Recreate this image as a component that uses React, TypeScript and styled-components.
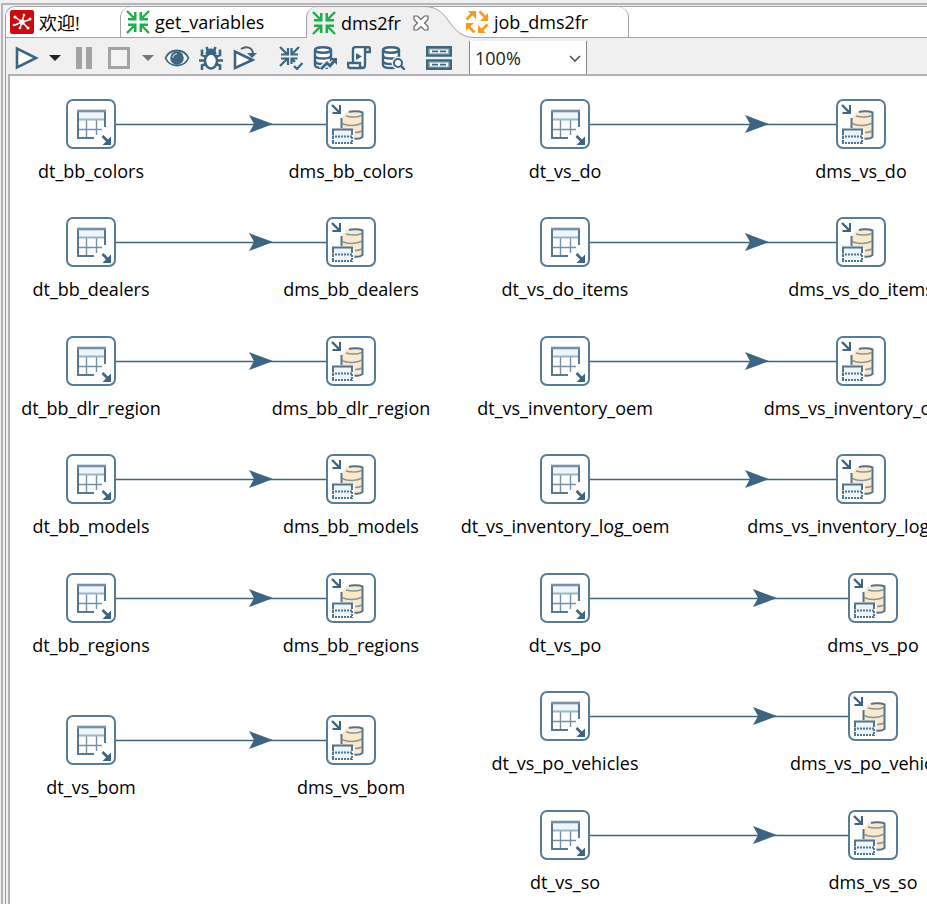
import React from "react";
import styled, { createGlobalStyle, css } from "styled-components";

const INK = "#3d6480";
const LINE = "#a3a3a6";

const GlobalStyle = createGlobalStyle`
  * { box-sizing: border-box; }
  html, body, #root { height: 100%; }
  body {
    margin: 0;
    background: #f0f0f0;
    color: #000;
    font-family: "Open Sans", "Noto Sans CJK SC", sans-serif;
    font-size: 18px;
    overflow: hidden;
  }
  button { font: inherit; color: inherit; border: 0; padding: 0; background: none; }
`;

const Shell = styled.div`
  height: 100%;
  min-height: 100vh;
  padding: 3px 0 0 1px;
  display: flex;
`;

const Frame = styled.div`
  flex: 1;
  min-width: 0;
  display: flex;
  border-left: 2px solid #b4b4ba;
  border-top: 2px solid #b4b4ba;
  padding: 1px 0 0 2px;
`;

const Editor = styled.main`
  flex: 1;
  min-width: 0;
  display: flex;
  flex-direction: column;
  border-left: 1px solid ${LINE};
  border-top: 1px solid ${LINE};
  border-top-left-radius: 10px;
`;

const TabBar = styled.div`
  display: flex;
  flex: none;
  height: 31px;
  background: #fff;
  border-bottom: 1px solid ${LINE};
  border-top-left-radius: 9px;
`;

const Tab = styled.div<{ $width: number; $kind?: "first" | "active" | "last" }>`
  position: relative;
  flex: none;
  display: flex;
  align-items: center;
  width: ${(p) => p.$width}px;
  height: 30px;
  padding-left: 5px;
  border-left: 1px solid ${LINE};
  border-top-left-radius: 10px;
  ${(p) =>
    p.$kind === "first" &&
    css`
      padding-left: 4px;
      border-left: 0;
    `}
  ${(p) =>
    p.$kind === "active" &&
    css`
      height: 31px;
      background: linear-gradient(#f0f0f0, #f0f0f0) left / 120px 100% no-repeat;
      z-index: 1;
    `}
  ${(p) =>
    p.$kind === "last" &&
    css`
      padding-left: 0;
      border-left: 0;
      border-right: 1px solid ${LINE};
      border-top-left-radius: 0;
      border-top-right-radius: 10px;
      z-index: 2;
    `}
`;

const TabButton = styled.button`
  display: flex;
  align-items: center;
  gap: 5px;
  height: 30px;
  white-space: nowrap;
  svg { flex: none; }
`;

const TabTail = styled.svg`
  position: absolute;
  left: 113px;
  top: -1px;
  z-index: -1;
`;

const CloseButton = styled.button`
  display: flex;
  margin-left: 12px;
`;

const Toolbar = styled.div`
  flex: none;
  display: flex;
  align-items: center;
  height: 36px;
  padding: 3px 0 0 8px;
`;

const Tool = styled.button<{ $width?: number; $after?: number }>`
  flex: none;
  display: flex;
  align-items: center;
  justify-content: center;
  width: ${(p) => p.$width ?? 26}px;
  height: 28px;
  margin-right: ${(p) => p.$after ?? 8}px;
`;

const ZoomField = styled.div`
  position: relative;
  align-self: flex-end;
  flex: none;
  display: flex;
  width: 118px;
  height: 33px;
  svg {
    position: absolute;
    right: 6px;
    top: 14px;
    pointer-events: none;
  }
`;

const ZoomSelect = styled.select`
  width: 100%;
  appearance: none;
  background: #fff;
  border: solid #85858a;
  border-width: 0 1px;
  border-radius: 0;
  padding: 0 5px;
  font: inherit;
  color: #222;
`;

const Canvas = styled.section`
  position: relative;
  flex: 1;
  margin-left: 2px;
  overflow: hidden;
  background: #fff;
  border: solid #b0b0b6;
  border-width: 2px 0 0 2px;
`;

const Hops = styled.svg`
  position: absolute;
  left: 0;
  top: 0;
  width: 100%;
  height: 100%;
`;

const Step = styled.div<{ $x: number; $y: number }>`
  position: absolute;
  left: ${(p) => p.$x}px;
  top: ${(p) => p.$y}px;
  width: 50px;
  display: flex;
  flex-direction: column;
  align-items: center;
`;

const StepBox = styled.button`
  flex: none;
  display: flex;
  align-items: center;
  justify-content: center;
  width: 50px;
  height: 50px;
  background: #fff;
  border: 2px solid #587c96;
  border-radius: 7px;
`;

const StepLabel = styled.span`
  margin-top: 9px;
  line-height: 26px;
  white-space: nowrap;
`;

const WelcomeIcon = () => (
  <svg width="24" height="24" viewBox="0 0 24 24">
    <rect width="24" height="24" rx="2" fill="#cc0a0e" />
    <g stroke="#fff" strokeWidth="1.5" fill="#fff">
      <path d="M12 12 5 7M12 12l2-7M12 12l7-2M12 12l6 6M12 12l-2 6M12 12l-7 3" />
      <circle cx="12" cy="12" r="2" />
      <circle cx="5" cy="7" r=".8" />
      <circle cx="14" cy="5" r=".6" />
      <circle cx="20" cy="9" r=".8" />
      <circle cx="18" cy="18" r=".8" />
      <circle cx="10" cy="18" r=".6" />
      <circle cx="4" cy="15" r=".6" />
    </g>
  </svg>
);

const InwardArrows = ({ size = 24, color = "#1fae4b" }) => (
  <svg width={size} height={size} viewBox="0 0 24 24" stroke={color} fill={color}>
    <path
      fill="none"
      strokeWidth="2.4"
      d="M1 1l8 8M23 1l-8 8M1 23l8-8M23 23l-8-8"
    />
    <path
      stroke="none"
      d="M10.500 2v8.500H2V8h6V2zM13.500 2v8.500H22V8h-6V2zM10.500 22v-8.500H2V16h6v6zM13.500 22v-8.500H22V16h-6v6z"
    />
  </svg>
);

const JobIcon = () => (
  <svg width="24" height="24" viewBox="0 0 24 24" stroke="#f79a20" fill="#f79a20">
    <path fill="none" strokeWidth="2.800" d="M1.500 9.500l6-6M14.500 1.500l6 6M22.500 14.500l-6 6M9.500 22.500l-6-6" />
    <path stroke="none" d="M3 1h8v8zM23 3v8h-8zM21 23h-8v-8zM1 21v-8h8z" />
  </svg>
);

const CloseIcon = () => (
  <svg width="16" height="16" viewBox="0 0 16 16">
    <path
      d="M1 1h3.500L8 4.500 11.500 1H15v3.500L11.500 8l3.500 3.500V15h-3.500L8 11.500 4.500 15H1v-3.500L4.500 8 1 4.500z"
      fill="#fff"
      stroke="#666"
      strokeWidth="1.200"
    />
  </svg>
);

const Caret = ({ color }: { color: string }) => (
  <svg width="12" height="6" viewBox="0 0 12 6">
    <path d="M0 0h12L6 6z" fill={color} />
  </svg>
);

const PlayIcon = () => (
  <svg width="24" height="24" viewBox="0 0 24 24">
    <path d="M2 2.500v19L21 12z" fill="#fff" stroke={INK} strokeWidth="2.600" />
  </svg>
);

const PauseIcon = () => (
  <svg width="16" height="22" viewBox="0 0 16 22">
    <path d="M0 0h6v22H0zM10 0h6v22h-6z" fill="#a3a3a3" />
  </svg>
);

const StopIcon = () => (
  <svg width="22" height="22" viewBox="0 0 22 22">
    <rect x="1.500" y="1.500" width="19" height="19" fill="#f3f3f3" stroke="#a3a3a3" strokeWidth="3" />
  </svg>
);

const EyeIcon = () => (
  <svg width="26" height="24" viewBox="0 0 26 24">
    <path d="M1.500 12C6 2 20 2 24.500 12 20 22 6 22 1.500 12z" fill="#fff" stroke={INK} strokeWidth="1.800" />
    <circle cx="13" cy="12" r="6.800" fill={INK} />
    <path d="M8.800 12a4.200 4.200 0 0 1 4.200-4.200" fill="none" stroke="#b8cbd8" strokeWidth="1.200" />
  </svg>
);

const BugIcon = () => (
  <svg width="24" height="24" viewBox="0 0 24 24" fill="none" stroke={INK} strokeWidth="2.600">
    <path d="M9 5 7.500 1M15 5l1.500-4M7 10.500 3 9V3.500M17 10.500 21 9V3.500M6 14.500H0M18 14.500h6M7 18l-4 1.500V24M17 18l4 1.500V24" />
    <ellipse cx="12" cy="15" rx="6" ry="7.500" fill="#fff" />
    <path d="M7.500 7.500a4.500 4 0 0 1 9 0z" fill={INK} strokeWidth="2" />
  </svg>
);

const ReplayIcon = () => (
  <svg width="24" height="24" viewBox="0 0 24 24" fill="none" stroke={INK}>
    <path d="M2 5.500v16.500L19.500 14z" fill="#fff" strokeWidth="2.600" />
    <path d="M8 3c5-3 11-2 12 4" strokeWidth="2" />
    <path d="M14 7h10l-5 5z" fill={INK} stroke="none" />
  </svg>
);

const VerifyIcon = () => (
  <svg width="24" height="24" viewBox="0 0 24 24" fill="none" stroke={INK} strokeWidth="2.200">
    <path d="M1 1l7 7M20 1l-7 7M1 20l7-7M2 8.500h7V2M19 8.500h-6.500V2M2 12.500h7V19M12.500 18v-5.500h6M13 13l3 3M15 20l3 3 5.500-6" />
  </svg>
);

const DbShape = () => (
  <>
    <path d="M2 4v15c0 2 4 3 8 3s8-1 8-3V4" fill="#fff" />
    <path d="M2 9.500c0 2 4 3 8 3s8-1 8-3M2 15c0 2 4 3 8 3s8-1 8-3" />
    <ellipse cx="10" cy="4" rx="8" ry="2.800" fill="#fff" />
  </>
);

const DbImpactIcon = () => (
  <svg width="24" height="24" viewBox="0 0 24 24" fill="none" stroke={INK} strokeWidth="2.400">
    <DbShape />
    <path d="M8 23l6-6 3 3 6-6" stroke="#f0f0f0" strokeWidth="6" />
    <path d="M8 23l6-6 3 3 5-6" strokeWidth="2.800" />
    <path d="M17 12h7v7z" fill={INK} stroke="none" />
  </svg>
);

const ScriptIcon = () => (
  <svg width="24" height="24" viewBox="0 0 24 24" fill="none" stroke={INK} strokeWidth="2.400">
    <path d="M6 17V4c0-2 1-3 3-3h12c-2 0-3 1-3 3v15c0 2-1 3-3 3H4c-2 0-3-1-3-3v-2h12v2c0 2 1 3 2 3" fill="#fff" />
    <path d="M18 6h5V3c0-1-1-2-2-2" />
    <path d="M9 7v7l6-3.500z" fill={INK} stroke="none" />
  </svg>
);

const DbSearchIcon = () => (
  <svg width="24" height="24" viewBox="0 0 24 24" fill="none" stroke={INK} strokeWidth="2.400">
    <DbShape />
    <circle cx="17" cy="17" r="6.500" fill="#f0f0f0" stroke="none" />
    <circle cx="17" cy="17" r="4" fill="#fff" strokeWidth="2" />
    <path d="M20 20l4 4" />
  </svg>
);

const ResultsIcon = () => (
  <svg width="26" height="24" viewBox="0 0 26 24" fill="none" stroke={INK} strokeWidth="2.400">
    <path d="M1.200 1.200h23.600v8.400H1.200zM1.200 14.400h23.600v8.400H1.200z" fill="#8fa8b8" />
    <path d="M4 5.400h18M4 18.600h18" stroke="#fff" strokeWidth="3.600" />
    <path d="M6 5.400h6M14 5.400h6M6 18.600h6M14 18.600h6" strokeWidth="1.800" />
  </svg>
);

const TableInputIcon = () => (
  <svg width="46" height="46" viewBox="0 0 46 46" fill="none">
    <path d="M10 10h27v8H10z" fill="#edf6fc" />
    <path d="M18.500 19v18M28.500 19v15M10 28.500h24" stroke="#7690a5" strokeWidth="1.400" />
    <path d="M10 18.500h27" stroke="#9db4c4" strokeWidth="2" />
    <path d="M37 26V10H10v27h16" stroke="#58788f" strokeWidth="2" />
    <path d="M9 10h29" stroke="#7891a5" strokeWidth="2.600" />
    <path d="M34.500 35l6 6" stroke={INK} strokeWidth="2.600" />
    <path d="M43 35.500V44h-8.500l3-3 2.500-2.500z" fill={INK} />
  </svg>
);

const TableOutputIcon = () => (
  <svg width="46" height="46" viewBox="0 0 46 46" fill="none">
    <path d="M13.500 17l5-6c4-2 12-2 16 0v25c-2 2-5 2-8 2v-9h-13z" fill="#fce8cb" />
    <path d="M21 11c3-1 10-1 13.500.500V36c-2 1.500-5 2-8 1.500M13.500 27V17" stroke="#54748b" strokeWidth="2" />
    <path d="M18 15c5 1.500 12 1 16-.500M14 22.500c6 3 15 2.500 20-.500M27 31.500c3 0 5-.500 7-1.500" stroke="#8397a1" strokeWidth="1.500" />
    <path d="M5 28.500h19v14H5z" fill="#edf6fc" />
    <path d="M4 28.500h21M5 28v6M24 28v6" stroke="#54748b" strokeWidth="2" />
    <path d="M4 35.500h21M4 42h21" stroke="#54748b" strokeWidth="1.800" strokeDasharray="2 1" />
    <path d="M5 36v7M24 36v7" stroke="#54748b" strokeWidth="2" strokeDasharray="2 1" />
    <path d="M4 4l7 7" stroke={INK} strokeWidth="2.400" />
    <path d="M13 4v9H4.500V11H9l2-2V4z" fill={INK} />
  </svg>
);

/* Canvas coordinates are the top-left corners of the step boxes. */
type Flow = { y: number; from: string; fromX: number; to: string; toX: number };

const flow = (y: number, fromX: number, toX: number, name: string): Flow => ({
  y,
  fromX,
  toX,
  from: `dt_${name}`,
  to: `dms_${name}`,
});

const flows: Flow[] = [
  flow(23, 56, 316, "bb_colors"),
  flow(141, 56, 316, "bb_dealers"),
  flow(260, 56, 316, "bb_dlr_region"),
  flow(378, 56, 316, "bb_models"),
  flow(497, 56, 316, "bb_regions"),
  flow(639, 56, 316, "vs_bom"),
  flow(23, 530, 826, "vs_do"),
  flow(141, 530, 826, "vs_do_items"),
  flow(260, 530, 826, "vs_inventory_oem"),
  flow(378, 530, 826, "vs_inventory_log_oem"),
  flow(497, 530, 838, "vs_po"),
  flow(615, 530, 838, "vs_po_vehicles"),
  flow(734, 530, 838, "vs_so"),
];

const Hop = ({ f }: { f: Flow }) => {
  const y = f.y + 25;
  const tip = Math.round((f.toX - f.fromX) * 0.63 + f.fromX + 43);
  return (
    <g>
      <path d={`M${f.fromX + 50} ${y + 0.5}H${f.toX}`} stroke={INK} strokeWidth="1.500" />
      <path d={`M${tip} ${y}l-24-9 5 9-5 9z`} fill={INK} />
    </g>
  );
};

export default function App() {
  return (
    <>
      <GlobalStyle />
      <Shell>
        <Frame>
          <Editor>
            <TabBar role="tablist">
              <Tab $width={114} $kind="first">
                <TabButton role="tab"><WelcomeIcon />欢迎!</TabButton>
              </Tab>
              <Tab $width={186}>
                <TabButton role="tab"><InwardArrows />get_variables</TabButton>
              </Tab>
              <Tab $width={159} $kind="active">
                <TabTail width="54" height="32" viewBox="0 0 54 32">
                  <path d="M0 1h5C31 1 28 31 54 31.500V32H0z" fill="#f0f0f0" />
                  <path d="M5 .500C31 1 28 31 54 31.500" fill="none" stroke={LINE} />
                </TabTail>
                <TabButton role="tab" aria-selected><InwardArrows />dms2fr</TabButton>
                <CloseButton aria-label="Close dms2fr"><CloseIcon /></CloseButton>
              </Tab>
              <Tab $width={164} $kind="last">
                <TabButton role="tab"><JobIcon />job_dms2fr</TabButton>
              </Tab>
            </TabBar>
            <Toolbar role="toolbar" aria-label="Transformation">
              <Tool aria-label="Run"><PlayIcon /></Tool>
              <Tool aria-label="Run options" $width={14} $after={14}><Caret color="#222" /></Tool>
              <Tool aria-label="Pause" $width={16} $after={16}><PauseIcon /></Tool>
              <Tool aria-label="Stop" $width={22} $after={12}><StopIcon /></Tool>
              <Tool aria-label="Stop options" $width={12} $after={10}><Caret color="#777" /></Tool>
              <Tool aria-label="Preview"><EyeIcon /></Tool>
              <Tool aria-label="Debug"><BugIcon /></Tool>
              <Tool aria-label="Replay" $after={20}><ReplayIcon /></Tool>
              <Tool aria-label="Verify"><VerifyIcon /></Tool>
              <Tool aria-label="Analyze impact"><DbImpactIcon /></Tool>
              <Tool aria-label="Generate SQL"><ScriptIcon /></Tool>
              <Tool aria-label="Explore database" $after={20}><DbSearchIcon /></Tool>
              <Tool aria-label="Show results" $after={17}><ResultsIcon /></Tool>
              <ZoomField>
                <ZoomSelect aria-label="Zoom" defaultValue="100%">
                  <option>50%</option>
                  <option>100%</option>
                  <option>200%</option>
                </ZoomSelect>
                <svg width="12" height="8" viewBox="0 0 12 8">
                  <path d="M1 1l5 5 5-5" fill="none" stroke="#555" strokeWidth="1.600" />
                </svg>
              </ZoomField>
            </Toolbar>
            <Canvas>
              <Hops>
                {flows.map((f) => <Hop key={f.from} f={f} />)}
              </Hops>
              {flows.map((f) => (
                <React.Fragment key={f.from}>
                  <Step $x={f.fromX} $y={f.y}>
                    <StepBox aria-label={f.from}><TableInputIcon /></StepBox>
                    <StepLabel>{f.from}</StepLabel>
                  </Step>
                  <Step $x={f.toX} $y={f.y}>
                    <StepBox aria-label={f.to}><TableOutputIcon /></StepBox>
                    <StepLabel>{f.to}</StepLabel>
                  </Step>
                </React.Fragment>
              ))}
            </Canvas>
          </Editor>
        </Frame>
      </Shell>
    </>
  );
}
